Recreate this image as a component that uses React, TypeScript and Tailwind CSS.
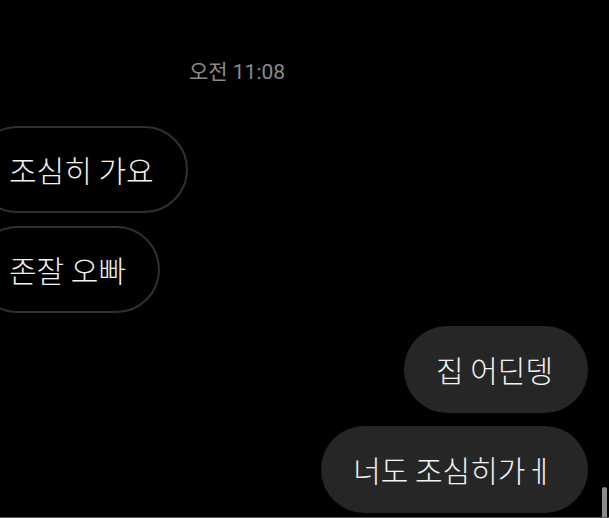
import React from 'react';

type Msg = { text: string; mine: boolean };

const messages: Msg[] = [
  { text: '조심히 가요', mine: false },
  { text: '존잘 오빠', mine: false },
  { text: '집 어딘뎅', mine: true },
  { text: '너도 조심히가ㅔ', mine: true },
];

const font = { fontFamily: '"Noto Sans CJK KR", "Noto Sans", sans-serif' };
const timeFont = { fontFamily: 'Roboto, "Noto Sans CJK KR", sans-serif' };

const Bubble = ({ text, mine }: Msg) => {
  if (mine) {
    return (
      <div className="flex justify-end pr-[21px]">
        <div className="h-[87px] flex items-center rounded-full bg-[#262626] pl-[32px] pr-[35px] text-[30px] font-light text-[#f2f2f2]">
          {text}
        </div>
      </div>
    );
  }
  return (
    <div className="flex justify-start">
      <div className="ml-[-26px] h-[87px] flex items-center rounded-full border-2 border-[#303030] pl-[33px] pr-[32px] text-[30px] font-light text-[#f2f2f2]">
        {text}
      </div>
    </div>
  );
};

export default function App() {
  return (
    <div className="relative w-[609px] h-[518px] overflow-hidden bg-black" style={font}>
      <div className="flex flex-col">
        <div className="h-[126px] flex items-start justify-center pt-[62px] pr-[135px]">
          <span className="text-[21px] text-[#8a8a8a] leading-none" style={timeFont}>
            오전 11:08
          </span>
        </div>
        <div className="flex flex-col gap-[13px]">
          {messages.map((m, i) => (
            <Bubble key={i} {...m} />
          ))}
        </div>
      </div>
      <div className="absolute right-[2px] top-[487px] w-[5px] h-[30px] rounded-t-full bg-[#8a8a8a]" />
      <div className="absolute left-0 right-0 bottom-0 h-[1px] bg-[#5a5a5a]" />
    </div>
  );
}
